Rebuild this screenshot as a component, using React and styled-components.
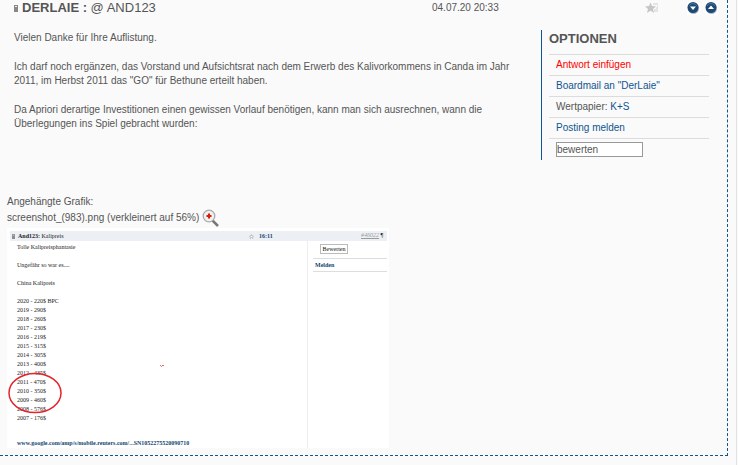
import React, { useState } from "react";
import styled, { createGlobalStyle } from "styled-components";

const GlobalStyle = createGlobalStyle`
  * {
    box-sizing: border-box;
  }

  body {
    margin: 0;
    background: #fafafa;
    color: #555;
    font-family: "Liberation Sans", Arial, sans-serif;
    font-size: 10px;
    line-height: 14px;
  }
`;

const Page = styled.div`
  min-height: 100vh;
  margin-right: 1px;
  padding-right: 8px;
  border-right: 1px solid #e3e3e3;
`;

const Post = styled.article`
  padding-bottom: 7px;
  border: 1px dashed #0f5591;
  border-width: 0 1px 1px 0;
`;

const PostHeader = styled.header`
  display: grid;
  grid-template-columns: minmax(0, 1fr) 213px 66px;
  align-items: center;
  height: 14px;
  padding: 0 16px 0 14px;
`;

const Title = styled.h1`
  display: flex;
  align-items: center;
  gap: 4px;
  margin: 0;
  font-size: 13px;
  line-height: 16px;
  font-weight: normal;
`;

const HeaderIcons = styled.div`
  display: flex;
  align-items: center;
`;

const IconButton = styled.button`
  display: flex;
  margin: 0 ${(props) => props.$gap || 0}px 0 0;
  padding: 0;
  border: 0;
  background: none;
  cursor: pointer;
`;

const Columns = styled.div`
  display: flex;
  align-items: flex-start;
  justify-content: space-between;
  padding: 16px 18px 0 14px;
`;

const Message = styled.div`
  flex: 1;
  max-width: 504px;
  min-height: 165px;
  padding-top: 1px;

  p {
    margin: 0 0 15px;
  }
`;

const Options = styled.aside`
  width: 168px;
  padding: 0 0 1px 7px;
  border-left: 1px solid #0f5591;
`;

const OptionsTitle = styled.h2`
  margin: 0;
  padding-bottom: 7px;
  font-size: 13px;
  line-height: 17px;
`;

const OptionList = styled.ul`
  margin: 0;
  padding: 0;
  list-style: none;
`;

const OptionItem = styled.li`
  height: 21px;
  padding: 3px 0 0 7px;
  border-top: 1px solid #dcdcdc;
`;

const Link = styled.a`
  color: ${(props) => (props.$alert ? "#f00" : "#0f5591")};
  text-decoration: none;
`;

const RatingSelect = styled.select`
  display: block;
  width: 87px;
  height: 15px;
  margin: 0;
  padding: 0;
  appearance: none;
  border: 1px solid #999;
  border-radius: 0;
  background: #fff;
  color: #555;
  font: inherit;
`;

const Attachment = styled.section`
  padding-left: 7px;
`;

const FileName = styled.div`
  display: flex;
  align-items: center;
  gap: 3px;
  height: 18px;
  margin-bottom: 1px;
`;

const Snapshot = styled.figure`
  position: relative;
  max-width: 382px;
  margin: 0;
  padding: 3px 2px 0 3px;
  background: #fff;
  color: #222;
  font-family: "Liberation Serif", serif;
  font-size: 6px;
  line-height: 9px;
`;

const SnapshotBar = styled.div`
  display: grid;
  grid-template-columns: minmax(0, 1fr) 112px 26px;
  height: 10px;
  padding-left: 2px;
  background: #ecf0f4;
`;

const BarLabel = styled.div`
  display: flex;
  align-items: center;
  gap: 3px;
`;

const BarTime = styled(BarLabel)`
  gap: 5px;
  color: #12466f;
  font-weight: bold;
`;

const PostNumber = styled.a`
  color: #999;
  font-style: italic;
`;

const SnapshotBody = styled.div`
  display: grid;
  grid-template-columns: minmax(0, 1fr) 80px;
  min-height: 206px;
`;

const SnapshotText = styled.div`
  padding: 2px 0 0 7px;

  p {
    margin: 0 0 9px;
  }
`;

const PriceList = styled.ul`
  margin: 0 0 16px;
  padding: 0;
  list-style: none;
`;

const SnapshotLink = styled(Link)`
  color: #12466f;
  font-weight: bold;
`;

const SnapshotSide = styled.div`
  padding: 3px 0 0 5px;
  border-left: 1px solid #eee;
`;

const RateButton = styled.button`
  display: block;
  width: 28px;
  height: 10px;
  margin: 0 0 4px 7px;
  padding: 0;
  border: 1px solid #bbb;
  background: #fff;
  color: #111;
  font: inherit;
  line-height: 8px;
`;

const ReportRow = styled.div`
  height: 14px;
  padding: 2px;
  border: 1px solid #ddd;
  border-width: 1px 0;
`;

const Marks = styled.svg`
  position: absolute;
  left: 0;
  top: 134px;
`;

const prices = [
  "2020 - 220$ BPC",
  "2019 - 290$",
  "2018 - 260$",
  "2017 - 230$",
  "2016 - 219$",
  "2015 - 315$",
  "2014 - 305$",
  "2013 - 400$",
  "2012 - 435$",
  "2011 - 470$",
  "2010 - 350$",
  "2009 - 460$",
  "2008 - 576$",
  "2007 - 176$",
];

function StatusIcon({ small }) {
  return (
    <svg width={small ? 3 : 4} height={small ? 5 : 7} viewBox="0 0 4 7">
      <path d="M0 0h4v7H0z" fill="#888" />
      <path d="M1 1h2v1H1z" fill="#eee" />
    </svg>
  );
}

function StarIcon() {
  return (
    <svg width="14" height="12" viewBox="0 0 14 12">
      <path d="M8 1h5v9H9V7h2V5h1V3H8z" fill="#e4e4e4" />
      <path
        d="M5.5 .5l1.5 3.6 4 .3-3 2.6 1 4-3.5-2.2L2 11l1-4L0 4.4l4-.3z"
        fill="#c6c6c6"
      />
    </svg>
  );
}

function ArrowIcon({ up }) {
  return (
    <svg width="14" height="14" viewBox="0 0 14 14">
      <path d="M1 1h13v13H1z" fill="#fff" />
      <circle cx="7.5" cy="7.5" r="5.5" fill="#aeb8c2" />
      <circle cx="7" cy="6.5" r="5.5" fill="#1d4975" />
      <path d="M3 5a4.4 4.4 0 0 1 8 0" fill="none" stroke="#4f7298" />
      <path d={up ? "M4 8l3-3.5L10 8z" : "M4 5.5h6L7 9z"} fill="#fff" />
    </svg>
  );
}

function MagnifierIcon() {
  return (
    <svg width="17" height="18" viewBox="0 0 17 18">
      <path d="M10 11l6 6" stroke="#777" strokeWidth="2.5" />
      <circle cx="7" cy="7" r="5.8" fill="#f1f1f1" stroke="#aaa" strokeWidth="1.3" />
      <path d="M7 4.5v5M4.5 7h5" stroke="#dc1c08" strokeWidth="2" />
    </svg>
  );
}

export default function App() {
  const [rating, setRating] = useState("");

  return (
    <Page>
      <GlobalStyle />
      <Post>
        <PostHeader>
          <Title>
            <StatusIcon />
            <span>
              <b>DERLAIE :</b> @ AND123
            </span>
          </Title>
          <time dateTime="2020-07-04T20:33">04.07.20 20:33</time>
          <HeaderIcons>
            <IconButton $gap={27} aria-label="Beitrag merken">
              <StarIcon />
            </IconButton>
            <IconButton $gap={4} aria-label="Nach unten">
              <ArrowIcon />
            </IconButton>
            <IconButton aria-label="Nach oben">
              <ArrowIcon up />
            </IconButton>
          </HeaderIcons>
        </PostHeader>

        <Columns>
          <Message>
            <p>Vielen Danke für Ihre Auflistung.</p>
            <p>
              Ich darf noch ergänzen, das Vorstand und Aufsichtsrat nach dem
              Erwerb des Kalivorkommens in Canda im Jahr 2011, im Herbst 2011
              das "GO" für Bethune erteilt haben.
            </p>
            <p>
              Da Apriori derartige Investitionen einen gewissen Vorlauf
              benötigen, kann man sich ausrechnen, wann die Überlegungen ins
              Spiel gebracht wurden:
            </p>
          </Message>
          <Options>
            <OptionsTitle>OPTIONEN</OptionsTitle>
            <OptionList>
              <OptionItem>
                <Link $alert href="#antwort">
                  Antwort einfügen
                </Link>
              </OptionItem>
              <OptionItem>
                <Link href="#boardmail">Boardmail an "DerLaie"</Link>
              </OptionItem>
              <OptionItem>
                Wertpapier: <Link href="#wertpapier">K+S</Link>
              </OptionItem>
              <OptionItem>
                <Link href="#melden">Posting melden</Link>
              </OptionItem>
              <OptionItem>
                <RatingSelect
                  aria-label="Beitrag bewerten"
                  value={rating}
                  onChange={(e) => setRating(e.target.value)}
                >
                  <option value="">bewerten</option>
                  <option value="gut">gut analysiert</option>
                  <option value="interessant">interessant</option>
                </RatingSelect>
              </OptionItem>
            </OptionList>
          </Options>
        </Columns>

        <Attachment>
          <div>Angehängte Grafik:</div>
          <FileName>
            screenshot_(983).png (verkleinert auf 56%)
            <IconButton aria-label="Grafik vergrößern">
              <MagnifierIcon />
            </IconButton>
          </FileName>
          <Snapshot>
            <SnapshotBar>
              <BarLabel>
                <StatusIcon small />
                <span>
                  <b>And123:</b> Kalipreis
                </span>
              </BarLabel>
              <BarTime>
                <svg width="5" height="5" viewBox="0 0 10 10">
                  <path
                    d="M5 1l1.2 3H9L7 6l1 3-3-2-3 2 1-3-2-2h2.8z"
                    fill="#fff"
                    stroke="#999"
                  />
                </svg>
                16:11
              </BarTime>
              <div>
                <PostNumber href="#46022">#46022</PostNumber> ¶
              </div>
            </SnapshotBar>
            <SnapshotBody>
              <SnapshotText>
                <p>Tolle Kalipreisphantasie</p>
                <p>Ungefähr so war es....</p>
                <p>China Kalipreis</p>
                <PriceList>
                  {prices.map((price) => (
                    <li key={price}>{price}</li>
                  ))}
                </PriceList>
                <SnapshotLink href="#reuters">
                  www.google.com/amp/s/mobile.reuters.com/...SN1052275520090710
                </SnapshotLink>
              </SnapshotText>
              <SnapshotSide>
                <RateButton>Bewerten</RateButton>
                <ReportRow>
                  <SnapshotLink href="#report">Melden</SnapshotLink>
                </ReportRow>
              </SnapshotSide>
            </SnapshotBody>
            <Marks width="160" height="54" viewBox="0 0 160 54" fill="none" stroke="#e3242b">
              <ellipse cx="28" cy="31" rx="26" ry="19.5" strokeWidth="1.5" />
              <path d="M153 3l1.5 1.5L156 3l1 1" strokeWidth="0.7" />
            </Marks>
          </Snapshot>
        </Attachment>
      </Post>
    </Page>
  );
}
